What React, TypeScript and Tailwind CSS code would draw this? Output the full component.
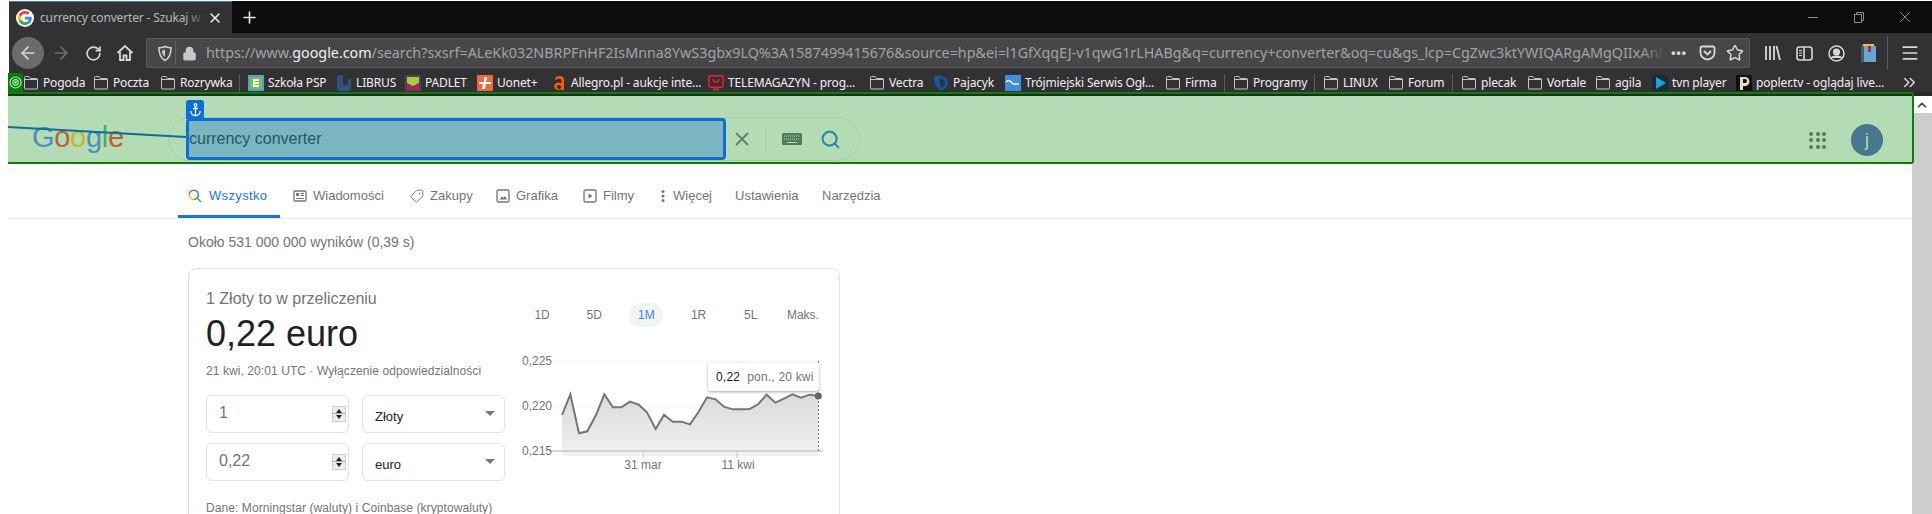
import {
  ArrowLeft,
  ArrowRight,
  ChevronUp,
  ChevronsRight,
  Lock,
  Menu,
  Plus,
  RotateCw,
  Search,
  Star,
  Tag,
  X,
} from 'lucide-react';
import type { ReactNode } from 'react';

const URL_TEXT =
  '/search?sxsrf=ALeKk032NBRPFnHF2IsMnna8YwS3gbx9LQ%3A1587499415676&source=hp&ei=l1GfXqqEJ-v1qwG1rLHABg&q=currency+converter&oq=cu&gs_lcp=CgZwc3ktYWIQARgAMgQIIxAnMgQIIxAnMgIIx';

function FolderIcon() {
  return (
    <svg width="16" height="15" viewBox="0 0 16 15" fill="none" stroke="#c4c4c4" strokeWidth="1" className="shrink-0">
      <path d="M1.500 13.500v-11a1 1 0 0 1 1-1h3.500l1.500 2h6a1 1 0 0 1 1 1v9a.5.5 0 0 1-.5.5h-12a.5.5 0 0 1-.5-.5z" />
      <path d="M1.500 4.500h13" />
    </svg>
  );
}

function BoxIcon({ children }: { children: ReactNode }) {
  return (
    <svg width="16" height="16" viewBox="0 0 16 16" className="shrink-0">
      {children}
    </svg>
  );
}

const bookmarks: { label: string; width: string; icon?: ReactNode; sepAfter?: boolean }[] = [
  { label: 'Pogoda', width: 'w-[70px]' },
  { label: 'Poczta', width: 'w-[67px]' },
  { label: 'Rozrywka', width: 'w-[79px]', sepAfter: true },
  {
    label: 'Szkoła PSP',
    width: 'w-[88px]',
    icon: (
      <BoxIcon>
        <rect width="16" height="16" fill="#4f9fd8" />
        <rect x="2" y="2" width="12" height="12" fill="#7cc242" />
        <path d="M5 4h6v2H7v1h4v2H7v1h4v2H5z" fill="#fff" />
      </BoxIcon>
    ),
  },
  {
    label: 'LIBRUS',
    width: 'w-[69px]',
    icon: (
      <BoxIcon>
        <path d="M1 3a3 3 0 0 1 3-3h3v10h3a2 2 0 0 0 2-2V4h3v9a3 3 0 0 1-3 3H4a3 3 0 0 1-3-3z" fill="#33507f" />
      </BoxIcon>
    ),
  },
  {
    label: 'PADLET',
    width: 'w-[72px]',
    icon: (
      <BoxIcon>
        <rect width="16" height="16" fill="#4a4a4a" />
        <path d="M2 2h12v6L8 11 2 8z" fill="#a8cc3c" />
        <path d="M2 9l5 3v3H2z" fill="#e6007e" />
        <path d="M14 9l-5 3v3h5z" fill="#e6007e" />
      </BoxIcon>
    ),
  },
  {
    label: 'Uonet+',
    width: 'w-[74px]',
    icon: (
      <BoxIcon>
        <rect width="16" height="16" fill="#ee6a3c" />
        <path d="M7 2h3l-1 5h5v2H9l-1 5H5l1-5H2V7h5z" fill="#fff" />
      </BoxIcon>
    ),
  },
  {
    label: 'Allegro.pl - aukcje inte...',
    width: 'w-[157px]',
    icon: (
      <BoxIcon>
        <path d="M4 4.500a4.500 3.500 0 0 1 9 0V15h-2.500v-1a4.500 3.500 0 1 1 0-5.500V5a2.500 2 0 0 0-4.500-.5zM8 10a2.200 2 0 1 0 .01 0z" fill="#ff5a00" fillRule="evenodd" />
      </BoxIcon>
    ),
  },
  {
    label: 'TELEMAGAZYN - prog...',
    width: 'w-[161px]',
    icon: (
      <BoxIcon>
        <rect x="1" y="0.700" width="14" height="11.500" rx="1.500" fill="none" stroke="#e8202a" strokeWidth="1.600" />
        <path d="M5 4c0 4 6 4 6 0" fill="none" stroke="#e8202a" strokeWidth="1.400" />
        <rect x="5" y="13.500" width="6" height="2" fill="#e8202a" />
      </BoxIcon>
    ),
  },
  { label: 'Vectra', width: 'w-[64px]' },
  {
    label: 'Pajacyk',
    width: 'w-[72px]',
    icon: (
      <BoxIcon>
        <path d="M1 2l3-1c5-1 10 2 11 6 0 4-3 8-7 8-4-1-6-5-6-8z" fill="#0f5aa8" />
        <path d="M7 3c3 0 5 3 5 5s-2 5-4 5c-1-3-2-7-1-10z" fill="#323234" />
      </BoxIcon>
    ),
  },
  {
    label: 'Trójmiejski Serwis Ogł...',
    width: 'w-[160px]',
    icon: (
      <BoxIcon>
        <rect width="16" height="16" fill="#3c8fe0" />
        <path d="M1 7c3-3 4-1 6 1s4 1 7 1" fill="none" stroke="#fff" strokeWidth="1.400" />
      </BoxIcon>
    ),
  },
  { label: 'Firma', width: 'w-[59px]', sepAfter: true },
  { label: 'Programy', width: 'w-[81px]', sepAfter: true },
  { label: 'LINUX', width: 'w-[65px]' },
  { label: 'Forum', width: 'w-[64px]', sepAfter: true },
  { label: 'plecak', width: 'w-[66px]' },
  { label: 'Vortale', width: 'w-[68px]' },
  { label: 'agila', width: 'w-[57px]' },
  {
    label: 'tvn player',
    width: 'w-[84px]',
    icon: (
      <BoxIcon>
        <rect width="16" height="16" fill="#1c2a36" />
        <path d="M4 2l10 6-10 6z" fill="#16a4d8" />
      </BoxIcon>
    ),
  },
  {
    label: 'popler.tv - oglądaj live...',
    width: 'w-[154px]',
    icon: (
      <BoxIcon>
        <rect width="16" height="16" fill="#111" />
        <path d="M4 15V2h5a4 4 0 0 1 0 9H7v4zM7 4v4h2a2 2 0 0 0 0-4z" fill="#e8dcc0" fillRule="evenodd" />
      </BoxIcon>
    ),
  },
];

function Toolbar() {
  return (
    <div className="flex h-[40px] items-center bg-[#323234] pl-[3px]">
      <div className="flex h-[32px] w-[32px] items-center justify-center rounded-full bg-[#6b6b6c]">
        <ArrowLeft size={20} color="#d6d6d6" strokeWidth={2} />
      </div>
      <div className="flex w-[34px] justify-center">
        <ArrowRight size={20} color="#707072" strokeWidth={2} />
      </div>
      <div className="flex w-[30px] justify-center">
        <RotateCw size={17} color="#d8d8d8" strokeWidth={2.400} />
      </div>
      <div className="flex w-[34px] justify-center">
        <svg width="18" height="18" viewBox="0 0 18 18" fill="none" stroke="#d8d8d8" strokeWidth="1.800">
          <path d="M1.500 9L9 2l7.500 7" />
          <path d="M4 7.500V16h3.500v-4.500h3V16H14V7.500" />
        </svg>
      </div>
      <div className="ml-[4px] flex h-[30px] w-[1604px] items-center rounded-[2px] border border-[#5a5a5c] bg-[#474749] pl-[10px]">
        <svg width="16" height="17" viewBox="0 0 16 17" fill="none" stroke="#cfcfcf" strokeWidth="1.600" className="shrink-0">
          <path d="M8 1.500c2 1 4 1.300 6 1.300 0 6-1.500 10.500-6 12.700C3.500 13.300 2 8.800 2 2.800c2 0 4-.3 6-1.300z" />
          <path d="M8 4.500v7.500c-2-1.500-3-3.500-3-6.500 1 0 2-.4 3-1z" fill="#cfcfcf" stroke="none" />
        </svg>
        <div className="ml-[2px] h-[24px] w-px bg-[#626264]" />
        <Lock size={15} color="#c8c8c8" fill="#c8c8c8" strokeWidth={2} className="ml-[6px] shrink-0" />
        <div className="relative ml-[9px] w-[1460px] overflow-hidden whitespace-nowrap font-['Noto_Sans',sans-serif] text-[14.300px] leading-[20px] text-[#a2a2a3]">
          https://www.<span className="text-[#f0f0f0]">google.com</span>
          {URL_TEXT}
          <div className="absolute inset-y-0 right-0 w-[24px] bg-gradient-to-r from-transparent to-[#474749]" />
        </div>
        <div className="flex w-[28px] justify-center font-['Liberation_Sans',sans-serif] text-[12px] font-bold tracking-[1px] text-[#d8d8d8]">
          •••
        </div>
        <div className="flex w-[28px] justify-center">
          <svg width="17" height="16" viewBox="0 0 17 16" fill="none" stroke="#d8d8d8" strokeWidth="1.800">
            <path d="M1.500 3a1.500 1.500 0 0 1 1.500-1.500h11A1.500 1.500 0 0 1 15.500 3v4.500a7 7 0 0 1-14 0z" />
            <path d="M5 6l3.500 3.500L12 6" />
          </svg>
        </div>
        <div className="flex w-[28px] justify-center">
          <Star size={18} color="#d8d8d8" strokeWidth={2} />
        </div>
      </div>
      <div className="ml-[6px] flex w-[32px] justify-center">
        <svg width="17" height="16" viewBox="0 0 17 16" stroke="#d8d8d8" strokeWidth="1.800">
          <path d="M2 1v14M6 1v14M10 1v14M12.500 1l3.500 14" />
        </svg>
      </div>
      <div className="flex w-[32px] justify-center">
        <svg width="17" height="15" viewBox="0 0 17 15" fill="none" stroke="#d8d8d8" strokeWidth="1.600">
          <rect x="1" y="1" width="15" height="13" rx="2.500" />
          <path d="M8 1v13" />
          <path d="M3 4.500h3M3 7h3M3 9.500h3" strokeWidth="1" />
        </svg>
      </div>
      <div className="flex w-[32px] justify-center">
        <svg width="17" height="17" viewBox="0 0 17 17" fill="none" stroke="#d8d8d8" strokeWidth="1.500">
          <circle cx="8.500" cy="8.500" r="7.500" />
          <circle cx="8.500" cy="7" r="2.800" fill="#d8d8d8" />
          <path d="M3.500 13c1-2.500 9-2.500 10 0" fill="#d8d8d8" />
        </svg>
      </div>
      <div className="flex w-[32px] justify-center">
        <svg width="15" height="19" viewBox="0 0 15 19">
          <rect x="0" y="1" width="5" height="17" fill="#55585c" />
          <rect x="3" y="2" width="12" height="16" fill="#63a7d8" />
          <rect x="2" y="0" width="11" height="2" fill="#f2c230" />
          <rect x="7" y="2" width="3" height="6" fill="#c8202a" />
        </svg>
      </div>
      <div className="ml-[3px] h-[34px] w-px bg-[#5a5a5c]" />
      <div className="flex w-[44px] justify-center">
        <Menu size={20} color="#d8d8d8" strokeWidth={2} />
      </div>
    </div>
  );
}

function Bookmarks() {
  return (
    <div className="relative flex h-[19px] items-center bg-[#323234] pl-[14px] font-['Noto_Sans',sans-serif] text-[12px] tracking-[-0.150px] text-[#f0f0f0]">
      <div className="absolute left-[-1px] top-0 flex h-[19px] w-[15px] items-center justify-center rounded-tr-[3px] bg-[#0a7a0a]">
        <svg width="13" height="13" viewBox="0 0 13 13" fill="none" stroke="#a8e8b8" strokeWidth="1.200">
          <circle cx="6.500" cy="6.500" r="5.500" />
          <circle cx="6.500" cy="6.500" r="2.800" />
          <circle cx="6.500" cy="6.500" r="0.800" />
        </svg>
      </div>
      {bookmarks.map((b) => (
        <div key={b.label} className="flex items-center">
          <div className={`flex items-center gap-[4px] whitespace-nowrap ${b.width}`}>
            {b.icon ?? <FolderIcon />}
            <span className="leading-[19px]">{b.label}</span>
          </div>
          {b.sepAfter && (
            <div className="flex w-[9px] justify-start">
              <div className="h-[18px] w-px bg-[#5a5a5c]" />
            </div>
          )}
        </div>
      ))}
      <ChevronsRight size={19} color="#d8d8d8" strokeWidth={2} className="ml-[10px]" />
    </div>
  );
}

function GreenBar() {
  return (
    <div className="relative z-10 h-[72px] w-[1906px] rounded-br-[3px] rounded-tr-[3px] border-y-2 border-r-2 border-[#0a7f0a] bg-[#b4dcb4]">
      <div className="h-[2px] bg-[#232a23]" />
      <div className="flex h-[66px] items-start">
        <div className="ml-[24px] mt-[23px] w-[136px] font-['Liberation_Sans',sans-serif] text-[29px] leading-[36px] tracking-[-0.300px]">
          <span className="text-[#4a90c0]">G</span>
          <span className="text-[#c0603c]">o</span>
          <span className="text-[#c8b820]">o</span>
          <span className="text-[#4a90c0]">g</span>
          <span className="text-[#48ac60]">l</span>
          <span className="text-[#c0603c]">e</span>
        </div>
        <div className="relative mt-[21px] flex h-[44px] w-[692px] items-center justify-end rounded-full border border-[#a3ccaa]">
          <X size={22} color="#5a8468" strokeWidth={2} className="mr-[12px]" />
          <div className="mr-[16px] h-[30px] w-px bg-[#a3ccaa]" />
          <svg width="20" height="12" viewBox="0 0 20 12" className="mr-[18px]">
            <rect width="20" height="12" rx="1" fill="#4f7f58" />
            <path d="M2 3h16M2 6h16" stroke="#b4dcb4" strokeWidth="1" strokeDasharray="1 1" />
            <rect x="5" y="9" width="10" height="1" fill="#b4dcb4" />
          </svg>
          <Search size={21} color="#3287a6" strokeWidth={2.400} className="mr-[18px]" />
          <div className="absolute left-[17px] top-[0px] flex h-[42px] w-[540px] items-center rounded-[4px] border-[3px] border-[#0a6fdc] bg-[#7cb5bf] font-['Liberation_Sans',sans-serif] text-[16px] text-[#1f5a68]">
            currency converter
          </div>
          <div className="absolute left-[17px] top-[-18px] flex h-[19px] w-[18px] items-center justify-center rounded-t-[3px] bg-[#0a6fdc]">
            <svg width="11" height="14" viewBox="0 0 11 14" fill="none" stroke="#fff" strokeWidth="1.300">
              <circle cx="5.500" cy="2" r="1.300" />
              <path d="M5.500 3.500V13M3 5.500h5M.8 8c.2 3 2.500 4.500 4.700 4.800 2.200-.3 4.500-1.800 4.700-4.800" />
            </svg>
          </div>
        </div>
        <div className="ml-auto mr-[29px] mt-[28px] flex items-center gap-[25px]">
          <div className="grid grid-cols-3 gap-[2.500px]">
            {[0, 1, 2, 3, 4, 5, 6, 7, 8].map((n) => (
              <div key={n} className="h-[4px] w-[4px] rounded-full bg-[#4f7f58]" />
            ))}
          </div>
          <div className="flex h-[32px] w-[32px] items-center justify-center rounded-full bg-[#47778f] font-['Liberation_Sans',sans-serif] text-[18px] text-[#b4dcb4]">
            j
          </div>
        </div>
      </div>
      {/* inspector line from the page edge to the anchored input */}
      <svg width="180" height="14" viewBox="0 0 180 14" className="absolute left-0 top-[32px]">
        <path d="M0 1L178 11" stroke="#0a6fa0" strokeWidth="2" />
      </svg>
    </div>
  );
}

const googleTabs: { label: string; width: string; icon: ReactNode }[] = [
  {
    label: 'Wiadomości',
    width: 'w-[117px]',
    icon: (
      <svg width="14" height="14" viewBox="0 0 14 14" fill="none" stroke="#70757a" strokeWidth="1.300">
        <rect x="1" y="2" width="12" height="10" rx="1" />
        <rect x="3" y="4" width="3" height="3" fill="#70757a" stroke="none" />
        <path d="M7.500 4.500H11M7.500 6.500H11M3 9.500h8" strokeWidth="1" />
      </svg>
    ),
  },
  { label: 'Zakupy', width: 'w-[86px]', icon: <Tag size={14} color="#70757a" strokeWidth={1.600} className="rotate-90" /> },
  {
    label: 'Grafika',
    width: 'w-[87px]',
    icon: (
      <svg width="14" height="14" viewBox="0 0 14 14" fill="none" stroke="#70757a" strokeWidth="1.300">
        <rect x="1" y="1" width="12" height="12" rx="1.500" />
        <path d="M3.500 10.500l2.500-3 1.500 1.500 1.500-2 2 3.500z" fill="#70757a" stroke="none" />
      </svg>
    ),
  },
  {
    label: 'Filmy',
    width: 'w-[76px]',
    icon: (
      <svg width="14" height="14" viewBox="0 0 14 14" fill="none" stroke="#70757a" strokeWidth="1.300">
        <rect x="1" y="1" width="12" height="12" rx="1.500" />
        <path d="M5.500 4.500L9.500 7l-4 2.500z" fill="#70757a" stroke="none" />
      </svg>
    ),
  },
  {
    label: 'Więcej',
    width: 'w-[76px]',
    icon: (
      <svg width="8" height="14" viewBox="0 0 8 14" fill="#70757a">
        <circle cx="4" cy="2.500" r="1.500" />
        <circle cx="4" cy="7" r="1.500" />
        <circle cx="4" cy="11.500" r="1.500" />
      </svg>
    ),
  },
];

function SearchTabs() {
  return (
    <div className="flex h-[55px] border-b border-[#ebebeb] pl-[170px] font-['Liberation_Sans',sans-serif] text-[13px] leading-[16px] text-[#70757a]">
      <div className="flex h-[54px] w-[102px] items-start gap-[7px] border-b-[3px] border-[#1a73e8] pl-[10px] pt-[24px] tracking-[0.350px] text-[#1a73e8]">
        <svg width="14" height="14" viewBox="0 0 14 14" fill="none" strokeWidth="1.500" className="mt-px">
          <path d="M5.800 1.200A4.600 4.600 0 0 0 1.200 5.800" stroke="#ea4335" />
          <path d="M1.200 5.800a4.600 4.600 0 0 0 4.600 4.600" stroke="#fbbc05" />
          <path d="M5.800 10.400a4.600 4.600 0 0 0 3.300-1.400L13 13" stroke="#34a853" />
          <path d="M9.100 9a4.600 4.600 0 0 0-3.300-7.800" stroke="#4285f4" />
        </svg>
        Wszystko
      </div>
      <div className="ml-[13px] flex pt-[24px]">
        {googleTabs.map((t) => (
          <div key={t.label} className={`flex items-start gap-[6px] ${t.width}`}>
            <span className="mt-px">{t.icon}</span>
            {t.label}
          </div>
        ))}
        <div className="w-[87px]">Ustawienia</div>
        <div>Narzędzia</div>
      </div>
    </div>
  );
}

function Spinner() {
  return (
    <div className="flex h-[16px] w-[14px] flex-col justify-between border border-[#d0d0d0] bg-[#ececec]">
      <div className="mx-auto mt-[2px] h-0 w-0 border-x-[3px] border-b-[4px] border-x-transparent border-b-[#222]" />
      <div className="h-px bg-[#aaa]" />
      <div className="mx-auto mb-[2px] h-0 w-0 border-x-[3px] border-t-[4px] border-x-transparent border-t-[#222]" />
    </div>
  );
}

function ConverterRow({ value, unit }: { value: string; unit: string }) {
  return (
    <div className="flex gap-[13px]">
      <div className="flex h-[38px] w-[143px] items-center justify-between rounded-[6px] border border-[#dfe1e5] pl-[12px] pr-[1px] text-[16px] text-[#70757a]">
        <span className="-mt-[2px]">{value}</span>
        <span className="-mt-[1px] mr-[1px]">
          <Spinner />
        </span>
      </div>
      <div className="flex h-[38px] w-[143px] items-center justify-between rounded-[6px] border border-[#dfe1e5] pl-[12px] pr-[9px] text-[13px] text-[#222]">
        <span className="mt-[6px]">{unit}</span>
        <div className="-mt-[2px] h-0 w-0 border-x-[5px] border-t-[5px] border-x-transparent border-t-[#777]" />
      </div>
    </div>
  );
}

const chartPoints = [
  [186, 375], [211, 313], [237, 430], [262, 424], [288, 375], [313, 313], [339, 352], [364, 352],
  [390, 335], [416, 344], [441, 367], [467, 417], [492, 374], [518, 395], [544, 395], [570, 403],
  [595, 367], [621, 322], [647, 328], [672, 350], [698, 358], [724, 358], [749, 357], [775, 342],
  [800, 314], [826, 338], [852, 326], [877, 313], [903, 323], [929, 314], [955, 318],
].map(([x, y]) => [500 + x / 3, 290 + y / 3]);

function Chart() {
  const line = chartPoints.map(([x, y]) => `${x},${y}`).join(' ');
  return (
    <div className="relative mt-[18px] h-[135px] w-[322px]">
      <svg width="322" height="135" viewBox="516 345 322 135" className="block">
        <defs>
          <linearGradient id="area" x1="0" y1="0" x2="0" y2="1">
            <stop offset="0" stopColor="#dadada" />
            <stop offset="1" stopColor="#f1f1f1" />
          </linearGradient>
        </defs>
        <path d="M549 361H823M549 406H823" stroke="#f5f5f5" strokeWidth="1" />
        <polygon points={`562,456 ${line} 818.300,456`} fill="url(#area)" />
        <path d="M549 451H823" stroke="#c8c8c8" strokeWidth="1.500" />
        <path d="M643 451v7M737 451v7" stroke="#c8c8c8" strokeWidth="1" />
        <path d="M818.500 361V451" stroke="#777" strokeWidth="1" strokeDasharray="2 2" />
        <polyline points={line} fill="none" stroke="#757575" strokeWidth="2" />
        <circle cx="818.300" cy="396" r="3.500" fill="#666" />
        <g fontFamily="'Liberation Sans', sans-serif" fontSize="12" fill="#70757a">
          <text x="522" y="365">0,225</text>
          <text x="522" y="410">0,220</text>
          <text x="522" y="455">0,215</text>
          <text x="643" y="469" textAnchor="middle">31 mar</text>
          <text x="738" y="469" textAnchor="middle">11 kwi</text>
        </g>
      </svg>
      <div className="absolute left-[192px] top-[18px] flex h-[28px] w-[111px] items-center gap-[7px] whitespace-nowrap rounded-[2px] bg-white pl-[8px] text-[12px] tracking-[0.200px] text-[#70757a] shadow-[0_1px_3px_rgba(0,0,0,0.35)]">
        <span className="text-[#202124]">0,22</span>
        <span>pon., 20 kwi</span>
      </div>
    </div>
  );
}

function CurrencyCard() {
  const ranges = ['1D', '5D', '1M', '1R', '5L', 'Maks.'];
  return (
    <div className="ml-[180px] mt-[18px] flex h-[300px] w-[652px] shrink-0 rounded-[8px] border border-[#dfe1e5] pl-[17px] pt-[20px] font-['Liberation_Sans',sans-serif]">
      <div className="w-[299px] shrink-0">
        <div className="text-[16px] leading-[20px] text-[#70757a]">1 Złoty to w przeliczeniu</div>
        <div className="mt-[3px] text-[36px] leading-[44px] text-[#202124]">0,22 euro</div>
        <div className="mt-[7px] whitespace-nowrap text-[12px] leading-[16px] tracking-[0.080px] text-[#70757a]">
          21 kwi, 20:01 UTC · Wyłączenie odpowiedzialności
        </div>
        <div className="mt-[16px] flex flex-col gap-[10px]">
          <ConverterRow value="1" unit="Złoty" />
          <ConverterRow value="0,22" unit="euro" />
        </div>
        <div className="mt-[19px] whitespace-nowrap text-[12px] leading-[16px] tracking-[0.080px] text-[#70757a]">
          Dane: Morningstar (waluty) i Coinbase (kryptowaluty)
        </div>
      </div>
      <div className="ml-[11px] mt-[14px] w-[322px] shrink-0">
        <div className="grid w-[313px] grid-cols-6 text-center text-[12px] leading-[24px] text-[#70757a]">
          {ranges.map((r) =>
            r === '1M' ? (
              <div key={r} className="mx-auto w-[34px] rounded-full bg-[#f1f3f4] text-[#4285f4]">
                {r}
              </div>
            ) : (
              <div key={r}>{r}</div>
            ),
          )}
        </div>
        <Chart />
      </div>
    </div>
  );
}

export default function App() {
  return (
    <div className="flex h-[514px] w-[1932px] flex-col overflow-hidden bg-white pl-[9px] pt-px">
      {/* tab strip */}
      <div className="flex h-[32px] shrink-0 items-center bg-[#0c0c0c]">
        <div className="relative flex h-[32px] w-[223px] items-center border-t border-[#3b7cd0] bg-[#323234] pl-[7px]">
          <div className="flex h-[18px] w-[18px] items-center justify-center rounded-full bg-white">
            <svg width="14" height="14" viewBox="0 0 48 48">
              <path fill="#EA4335" d="M24 9.500c3.500 0 6.700 1.200 9.200 3.600l6.900-6.900C35.900 2.400 30.500 0 24 0 14.600 0 6.500 5.400 2.600 13.200l8 6.200C12.500 13.700 17.800 9.500 24 9.500z" />
              <path fill="#4285F4" d="M47 24.500c0-1.600-.1-3.100-.4-4.500H24v9h12.900c-.6 3-2.200 5.500-4.700 7.200l7.700 6C44.400 38 47 31.800 47 24.500z" />
              <path fill="#FBBC05" d="M10.500 28.600c-.5-1.400-.8-3-.8-4.600s.3-3.200.8-4.600l-8-6.200C.9 16.500 0 20.100 0 24s.9 7.500 2.600 10.800l7.900-6.200z" />
              <path fill="#34A853" d="M24 48c6.500 0 11.900-2.100 15.900-5.800l-7.700-6c-2.200 1.500-4.900 2.300-8.200 2.300-6.200 0-11.500-4.200-13.400-9.900l-8 6.200C6.500 42.600 14.600 48 24 48z" />
            </svg>
          </div>
          <div className="relative ml-[6px] w-[165px] overflow-hidden whitespace-nowrap font-['Noto_Sans',sans-serif] text-[12px] tracking-[-0.150px] text-[#b8b8b8]">
            currency converter - Szukaj w Google
            <div className="absolute inset-y-0 right-0 w-[20px] bg-gradient-to-r from-transparent to-[#323234]" />
          </div>
          <X size={16} color="#f0f0f0" strokeWidth={2.200} className="ml-[2px]" />
        </div>
        <Plus size={19} color="#e8e8e8" strokeWidth={2} className="ml-[8px]" />
        <div className="ml-auto flex pr-[4px]">
          <div className="flex w-[46px] justify-center">
            <svg width="12" height="12" viewBox="0 0 12 12" stroke="#8a8a8a">
              <path d="M1 6.500h10" />
            </svg>
          </div>
          <div className="flex w-[46px] justify-center">
            <svg width="12" height="12" viewBox="0 0 12 12" fill="none" stroke="#8a8a8a">
              <rect x="1.500" y="3.500" width="7" height="8" />
              <path d="M3.500 3.500v-2h7v8h-2" />
            </svg>
          </div>
          <div className="flex w-[46px] justify-center">
            <svg width="12" height="12" viewBox="0 0 12 12" stroke="#8a8a8a">
              <path d="M1 1l10 10M11 1L1 11" />
            </svg>
          </div>
        </div>
      </div>

      <Toolbar />
      <Bookmarks />

      <div className="-ml-px flex min-h-0 flex-1">
        <div className="flex w-[1904px] shrink-0 flex-col">
          <GreenBar />
          <SearchTabs />
          <div className="ml-[180px] mt-[15px] font-['Liberation_Sans',sans-serif] text-[14px] leading-[16px] text-[#70757a]">
            Około 531 000 000 wyników (0,39 s)
          </div>
          <CurrencyCard />
        </div>
        {/* scrollbar */}
        <div className="flex w-[20px] shrink-0 flex-col border-t-4 border-[#2a2a2c]">
          <div className="flex h-[17px] items-center justify-center bg-white">
            <ChevronUp size={14} color="#444" strokeWidth={3} />
          </div>
          <div className="flex-1 bg-[#cdcdcd]" />
        </div>
      </div>
    </div>
  );
}
